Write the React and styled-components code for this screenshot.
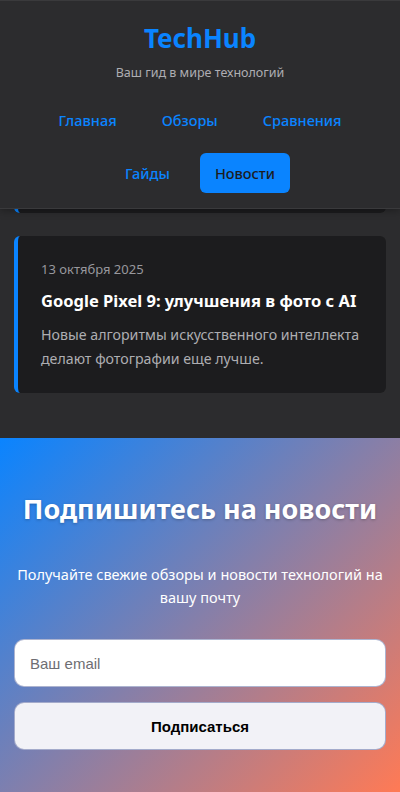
import React from "react";
import styled, { createGlobalStyle } from "styled-components";

const GlobalStyle = createGlobalStyle`
  * {
    box-sizing: border-box;
  }
  body {
    margin: 0;
    background: #2c2c2e;
    font-family: "Noto Sans", "Open Sans", sans-serif;
    color: #f2f2f7;
  }
`;

const news = [
  {
    id: 1,
    date: "14 октября 2025",
    title: "iPhone 17 Pro: первые впечатления",
    text: "Новый чип и обновленная камера.",
  },
  {
    id: 2,
    date: "13 октября 2025",
    title: "Google Pixel 9: улучшения в фото с AI",
    text: "Новые алгоритмы искусственного интеллекта делают фотографии еще лучше.",
  },
];

const navItems = ["Главная", "Обзоры", "Сравнения", "Гайды", "Новости"];

const App = () => {
  return (
    <>
      <GlobalStyle />
      <Header>
        <Logo>TechHub</Logo>
        <Tagline>Ваш гид в мире технологий</Tagline>
        <Nav>
          {navItems.map((item) => (
            <NavLink key={item} href="#" $active={item === "Новости"}>
              {item}
            </NavLink>
          ))}
        </Nav>
      </Header>

      <Feed>
        {news.map((item) => (
          <NewsCard key={item.id}>
            <NewsDate>{item.date}</NewsDate>
            <NewsTitle>{item.title}</NewsTitle>
            <NewsText>{item.text}</NewsText>
          </NewsCard>
        ))}
      </Feed>

      <Newsletter>
        <NewsletterTitle>Подпишитесь на новости</NewsletterTitle>
        <NewsletterText>
          Получайте свежие обзоры и новости технологий на вашу почту
        </NewsletterText>
        <Form onSubmit={(e) => e.preventDefault()}>
          <EmailInput type="email" placeholder="Ваш email" />
          <SubmitButton type="submit">Подписаться</SubmitButton>
        </Form>
      </Newsletter>
    </>
  );
};

const Header = styled.header`
  background: #2c2c2e;
  border-top: 1px solid #3a3a3c;
  border-bottom: 1px solid #3a3a3c;
  padding: 22px 16px 15px;
  text-align: center;
  box-shadow: 0 2px 8px rgba(0, 0, 0, 0.3);
  position: relative;
  z-index: 2;
`;

const Logo = styled.h1`
  margin: 0;
  font-size: 26px;
  line-height: 31px;
  font-weight: 700;
  color: #0a84ff;
`;

const Tagline = styled.p`
  margin: 9px 0 0;
  font-size: 12.5px;
  line-height: 20px;
  color: #aeaeb2;
`;

const Nav = styled.nav`
  margin-top: 17px;
  display: flex;
  flex-wrap: wrap;
  justify-content: center;
  column-gap: 15px;
  row-gap: 13px;
`;

const NavLink = styled.a`
  display: block;
  padding: 10px 15px;
  font-size: 14.5px;
  line-height: 20px;
  font-weight: 500;
  text-decoration: none;
  border-radius: 6px;
  color: ${(p) => (p.$active ? "#1c1c1e" : "#0a84ff")};
  background: ${(p) => (p.$active ? "#0a84ff" : "transparent")};
`;

const Feed = styled.main`
  height: 229px;
  overflow: hidden;
  display: flex;
  flex-direction: column;
  justify-content: flex-end;
  gap: 23px;
  padding: 0 14px 45px;
`;

const NewsCard = styled.article`
  flex-shrink: 0;
  background: #1c1c1e;
  border-left: 4px solid #0a84ff;
  border-radius: 6px;
  padding: 24px 16px 22px 23px;
`;

const NewsDate = styled.div`
  font-size: 13px;
  line-height: 18px;
  color: #98989d;
`;

const NewsTitle = styled.h3`
  margin: 11px 0 0;
  font-size: 16.5px;
  line-height: 24px;
  font-weight: 700;
  color: #ffffff;
`;

const NewsText = styled.p`
  margin: 10px 0 0;
  font-size: 14.2px;
  line-height: 24px;
  color: #aeaeb2;
`;

const Newsletter = styled.section`
  background: linear-gradient(135deg, #0a84ff 0%, #ff7a55 100%);
  padding: 55px 14px 42px;
  text-align: center;
`;

const NewsletterTitle = styled.h2`
  margin: 0;
  font-size: 27px;
  line-height: 32px;
  font-weight: 700;
  color: #ffffff;
  text-shadow: 0 1px 3px rgba(0, 0, 0, 0.25);
`;

const NewsletterText = styled.p`
  margin: 38px 0 0;
  font-size: 14.5px;
  line-height: 23px;
  color: #ffffff;
`;

const Form = styled.form`
  margin-top: 30px;
  display: flex;
  flex-direction: column;
  gap: 15px;
`;

const EmailInput = styled.input`
  height: 48px;
  padding: 0 15px;
  border: 1px solid rgba(20, 40, 120, 0.35);
  border-radius: 10px;
  background: #ffffff;
  font-family: "Liberation Sans", Arial, sans-serif;
  font-size: 15px;
  color: #1c1c1e;
  outline: none;
  &::placeholder {
    color: #6e6e73;
  }
`;

const SubmitButton = styled.button`
  height: 48px;
  border: 1px solid rgba(20, 40, 120, 0.35);
  border-radius: 10px;
  background: #f2f2f7;
  font-family: "Liberation Sans", Arial, sans-serif;
  font-size: 15px;
  font-weight: 700;
  color: #000000;
  cursor: pointer;
`;

export default App;
